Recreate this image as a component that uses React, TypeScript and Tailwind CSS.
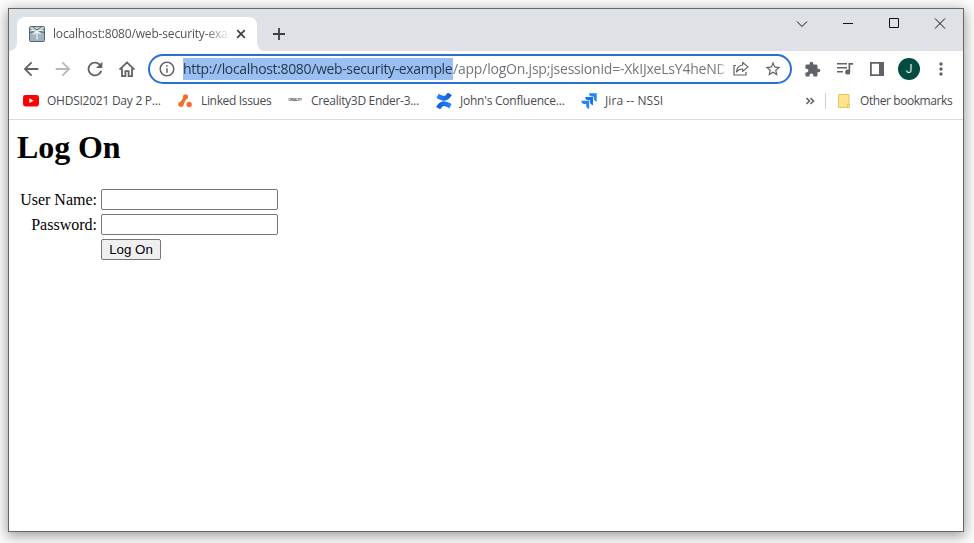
import type { ReactNode } from 'react';
import {
  MdArrowBack,
  MdArrowForward,
  MdRefresh,
  MdInfoOutline,
  MdStarBorder,
  MdExtension,
  MdMoreVert,
} from 'react-icons/md';

function Slot({ children, className = '' }: { children: ReactNode; className?: string }) {
  return (
    <div className={`flex h-8 w-8 shrink-0 items-center justify-center text-[#5f6368] ${className}`}>
      {children}
    </div>
  );
}

function TabIcon() {
  return (
    <svg width="16" height="16" viewBox="0 0 16 16" fill="none">
      <rect x="0.5" y="0.5" width="15" height="15" rx="1" fill="#9fb4c0" stroke="#56656e" />
      <path d="M1 1h14v4l-4 1H5L1 5z" fill="#c3d0d7" />
      <path d="M1 3l4 2.500h6L15 3M4 1l4 3 4-3M1 6.500l4-1M15 6.500l-4-1" stroke="#4a5d69" strokeWidth="0.9" />
      <path d="M8 5.500v8M4 8.500l4-3 3.500 2.500M2 4l5 1.500L14 4" stroke="#f5fafc" strokeWidth="1.2" />
    </svg>
  );
}

function TabStrip() {
  return (
    <div className="flex h-[42px] items-end bg-[#dee1e6]">
      <svg width="8" height="8" viewBox="0 0 8 8" className="shrink-0">
        <path d="M8 0v8H0a8 8 0 0 0 8-8z" fill="#fff" />
      </svg>
      <div className="flex h-[34px] w-[240px] shrink-0 items-center rounded-t-lg bg-white pl-3">
        <TabIcon />
        <div className="ml-2 w-[176px] overflow-hidden whitespace-nowrap text-[12px] leading-4 tracking-[-0.17px] text-[#505458] [mask-image:linear-gradient(to_right,black_152px,transparent_178px)]">
          localhost:8080/web-security-example
        </div>
        <svg width="16" height="16" viewBox="0 0 16 16" className="ml-1" stroke="#3c4043" strokeWidth="1.7">
          <path d="M4.2 4.2l7.6 7.6M11.8 4.2l-7.6 7.6" />
        </svg>
      </div>
      <svg width="8" height="8" viewBox="0 0 8 8" className="shrink-0">
        <path d="M0 0v8h8a8 8 0 0 1-8-8z" fill="#fff" />
      </svg>
      <svg width="28" height="34" viewBox="0 0 28 34" stroke="#3c4043" strokeWidth="1.8" className="shrink-0">
        <path d="M14 11v12M8 17h12" />
      </svg>
      <div className="flex-1" />
      <div className="mb-[13px] flex">
        <WindowButton><path d="M18 11.5l5 5 5-5" /></WindowButton>
        <WindowButton><path d="M18 13.5h10" /></WindowButton>
        <WindowButton><path d="M18.500 8.500h9v9h-9z" /></WindowButton>
        <WindowButton><path d="M18 8.500l10 10M28 8.500l-10 10" /></WindowButton>
      </div>
    </div>
  );
}

function WindowButton({ children }: { children: ReactNode }) {
  return (
    <svg width="46" height="28" viewBox="0 0 46 28" fill="none" stroke="#111" strokeWidth="1">
      {children}
    </svg>
  );
}

function Toolbar() {
  return (
    <div className="flex h-9 items-center pl-1.5">
      <Slot><MdArrowBack size={22} /></Slot>
      <Slot className="opacity-45"><MdArrowForward size={22} /></Slot>
      <Slot><MdRefresh size={22} /></Slot>
      <Slot>
        <svg width="18" height="18" viewBox="0 0 18 18" fill="none" stroke="currentColor" strokeWidth="1.8">
          <path d="M1.5 9.7L9 2.4l7.5 7.3M4 8.2v7.9h3.4v-5h3.2v5H14V8.2" />
        </svg>
      </Slot>
      <div className="ml-[5px] flex h-[30px] w-[644px] shrink-0 items-center rounded-full border-2 border-[#2a70d3] pl-2">
        <MdInfoOutline size={18} className="shrink-0 text-[#5f6368]" />
        <div className="ml-[7px] flex w-[541px] overflow-hidden whitespace-nowrap text-[14px] leading-[22px] text-[#73777b] [mask-image:linear-gradient(to_right,black_534px,transparent_545px)]">
          <span className="w-[270px] shrink-0 bg-[#9ac0f3] tracking-[-0.345px] text-[#28384c]">
            http://localhost:8080/web-security-example
          </span>
          <span className="tracking-[-0.21px]">/app/logOn.jsp;jsessionid=-XkIJxeLsY4heND</span>
        </div>
        <div className="flex w-8 shrink-0 items-center justify-center pl-0.5 text-[#5f6368]">
          <svg width="18" height="18" viewBox="0 0 18 18" fill="none" stroke="currentColor" strokeWidth="1.2">
            <path d="M4 5.500H2v9.500h12v-3" />
            <path d="M10.700 2.400l5.300 4.500-5.300 4.500V9C8 9 6 9.800 4.500 12c.3-4 2.500-6.600 6.200-7z" strokeLinejoin="round" />
          </svg>
        </div>
        <div className="flex w-8 shrink-0 items-center justify-center pl-0.5 text-[#5f6368]">
          <MdStarBorder size={18} />
        </div>
      </div>
      <Slot className="ml-[5px] pr-px"><MdExtension size={17} /></Slot>
      <Slot>
        <svg width="18" height="16" viewBox="0 0 18 16" fill="currentColor">
          <path d="M1 2h10v1.600H1zM1 6h10v1.600H1zM1 10h6v1.600H1zM12.500 2H17v1.800h-2.800V11a2.500 2.500 0 1 1-1.700-2.300z" />
        </svg>
      </Slot>
      <Slot>
        <svg width="14" height="14" viewBox="0 0 14 14">
          <path d="M0 0h14v14H0zM1.800 1.800v10.400H9V1.800z" fill="currentColor" fillRule="evenodd" />
        </svg>
      </Slot>
      <Slot>
        <div className="flex h-[22px] w-[22px] items-center justify-center rounded-full bg-[#004d40] font-['Roboto',sans-serif] text-[12px] text-[#e0eeeb]">
          J
        </div>
      </Slot>
      <Slot><MdMoreVert size={20} /></Slot>
    </div>
  );
}

function Bookmark({ icon, label, className }: { icon: ReactNode; label: string; className: string }) {
  return (
    <div className={`flex shrink-0 items-center whitespace-nowrap ${className}`}>
      <div className="mr-2 flex h-4 w-4 shrink-0 items-center justify-center">{icon}</div>
      {label}
    </div>
  );
}

const youtube = (
  <svg width="16" height="12" viewBox="0 0 16 12" className="shrink-0">
    <rect width="16" height="11.4" rx="2.4" fill="#f00" />
    <path d="M6.300 3.300l4.400 2.400-4.400 2.400z" fill="#fff" />
  </svg>
);

const linkedIssues = (
  <svg width="16" height="16" viewBox="0 0 16 16">
    <path d="M8.300 4L4.700 11" stroke="#f3702a" strokeWidth="3.6" />
    <circle cx="8.500" cy="3.800" r="2.600" fill="#f3702a" />
    <circle cx="4" cy="11.200" r="2.700" fill="#f3702a" />
    <circle cx="12.200" cy="11.500" r="2.700" fill="#f3702a" />
  </svg>
);

const creality = (
  <span className="font-['Liberation_Sans',sans-serif] text-[3px] font-bold leading-none tracking-[-0.200px] text-[#444]">
    CREALITY
  </span>
);

const confluence = (
  <svg width="16" height="16" viewBox="0 0 16 16" fill="none" strokeWidth="4.800">
    <defs>
      <linearGradient id="waveTop" x1="1" x2="0"><stop stopColor="#1260d8" /><stop offset="1" stopColor="#2684ff" /></linearGradient>
      <linearGradient id="waveBottom"><stop stopColor="#1260d8" /><stop offset="1" stopColor="#2684ff" /></linearGradient>
    </defs>
    <path d="M1.500 2.800C7 5.800 10 7.200 13.800.8" stroke="url(#waveTop)" />
    <path d="M14.500 13.200C9 10.200 6 8.800 2.200 15.200" stroke="url(#waveBottom)" />
  </svg>
);

const jira = (
  <svg width="16" height="16" viewBox="0 0 16 16" className="shrink-0">
    <path d="M8 .3H15.700V8.500Q12.700 7.700 12.700 5V3.600H11Q8.300 3.600 8 .3z" fill="#2684ff" />
    <path d="M4.200 4H12V12.200Q9 11.400 9 8.700V7.300H7.200Q4.500 7.300 4.200 4z" fill="#1871ee" />
    <path d="M.3 7.700H8.200V15.900Q5.200 15.100 5.200 12.400V11H3.400Q.6 11 .3 7.700z" fill="#2684ff" />
  </svg>
);

function BookmarksBar() {
  return (
    <div className="flex h-[33px] items-center border-b border-[#d8dadd] pb-[5px] pl-3.5 text-[12px] leading-4 text-[#484c50]">
      <Bookmark className="w-[154px] tracking-[-0.25px]" icon={youtube} label="OHDSI2021 Day 2 P..." />
      <Bookmark className="w-[110px] tracking-[-0.34px]" icon={linkedIssues} label="Linked Issues" />
      <Bookmark className="w-[149px] tracking-[-0.3px]" icon={creality} label="Creality3D Ender-3..." />
      <Bookmark className="w-[145px] tracking-[-0.23px]" icon={confluence} label="John's Confluence..." />
      <Bookmark className="w-[100px] tracking-[0.08px]" icon={jira} label="Jira -- NSSI" />
      <div className="flex-1" />
      <svg width="10" height="10" viewBox="0 0 10 10" fill="none" stroke="#5f6368" strokeWidth="1.6" className="mr-[10px]">
        <path d="M1.500 2l3 3-3 3M5.500 2l3 3-3 3" />
      </svg>
      <div className="mr-3 h-4 w-px bg-[#cdd0d4]" />
      <svg width="12" height="14" viewBox="0 0 12 14" className="mr-2.5">
        <path d="M.5.5h10.500v9.500h.5v3.500H.5z" fill="#ffe48c" stroke="#e6c75a" />
        <path d="M9.500 13.500v-3h2" fill="none" stroke="#e6c75a" />
      </svg>
      <div className="w-[103px] whitespace-nowrap tracking-[-0.42px]">Other bookmarks</div>
    </div>
  );
}

function LogOnPage() {
  return (
    <main className="pl-2 font-['Liberation_Serif',serif] text-black">
      <h1 className="pt-[9px] text-[32px] font-bold leading-[37px] tracking-[-0.1px]">Log On</h1>
      <form className="mt-[23px] grid grid-cols-[80px_177px] gap-x-1 gap-y-1 text-[16px] leading-[21px]">
        <label htmlFor="user" className="text-right">User Name:</label>
        <input id="user" className="h-[21px] rounded-[2px] border border-[#767676] bg-white px-0.5" />
        <label htmlFor="password" className="text-right">Password:</label>
        <input id="password" type="password" className="h-[21px] rounded-[2px] border border-[#767676] bg-white px-0.5" />
        <button
          type="button"
          className="col-start-2 h-[21px] w-[60px] rounded-[2px] border border-[#767676] bg-[#efefef] text-center font-['Liberation_Sans',sans-serif] text-[13.333px] leading-[19px]"
        >
          Log On
        </button>
      </form>
    </main>
  );
}

export default function App() {
  return (
    <div className="h-[543px] w-[974px] overflow-hidden bg-[#fcfcfc] pl-2 pt-2 font-['Open_Sans','Noto_Sans',sans-serif]">
      <div className="h-[524px] w-[956px] border border-[#666] bg-white shadow-[0_3px_12px_1px_rgba(0,0,0,0.38)]">
        <TabStrip />
        <Toolbar />
        <BookmarksBar />
        <LogOnPage />
      </div>
    </div>
  );
}
